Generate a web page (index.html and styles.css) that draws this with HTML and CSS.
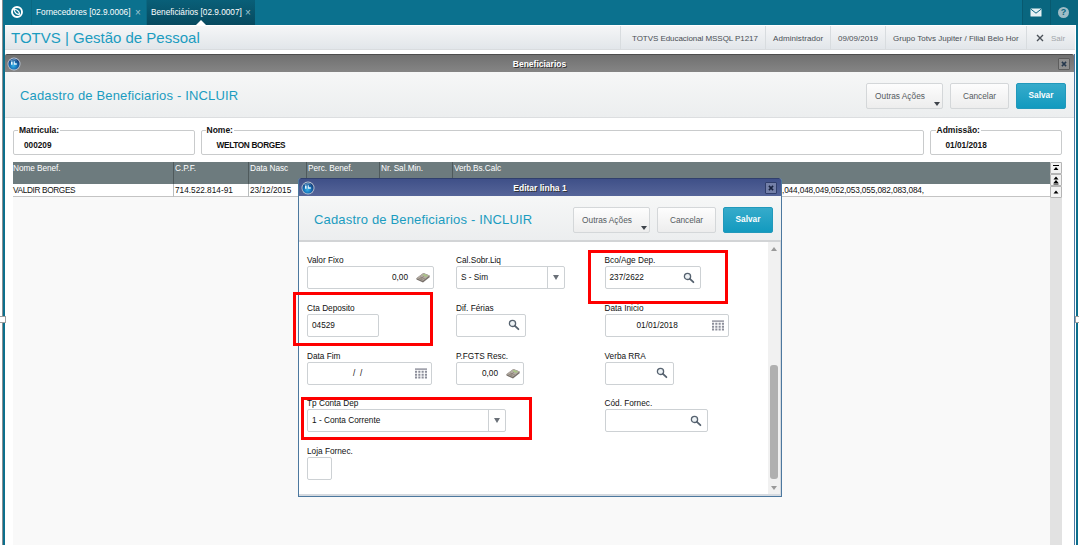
FILE: index.html
```html
<!DOCTYPE html>
<html lang="pt-BR">
<head>
    <meta charset="UTF-8">
    <title>TOTVS | Gestão de Pessoal</title>
    <link rel="stylesheet" href="styles.css">
</head>
<body>

<!-- shared icons -->
<svg class="defs" width="0" height="0">
    <defs>
        <radialGradient id="ball" cx="45%" cy="65%" r="60%">
            <stop offset="0" stop-color="#35b5ea"/>
            <stop offset="0.55" stop-color="#1672b8"/>
            <stop offset="1" stop-color="#173c78"/>
        </radialGradient>
        <symbol id="icon-app" viewBox="0 0 14 14">
            <circle cx="7" cy="7" r="6.5" fill="#b9c4d2"/>
            <circle cx="7" cy="7" r="5.6" fill="url(#ball)"/>
            <path d="M3 4.2C4 2 8 1.5 10.5 3.5C8 3 5.5 3.2 3 4.2Z" fill="#9fd4f0" opacity="0.7"/>
            <path d="M4 4.5h1.6v3.2H4zM6.7 4.2h1.1v2h2v1.5H6.7z" fill="#e6f5fc"/>
        </symbol>
        <symbol id="icon-search" viewBox="0 0 12 12">
            <circle cx="4.5" cy="4.4" r="3.1" fill="#eef3f6" stroke="#56626f" stroke-width="1.3"/>
            <path d="M6.9 6.8L10.4 10.2" stroke="#56626f" stroke-width="1.8" stroke-linecap="round"/>
        </symbol>
        <symbol id="icon-calendar" viewBox="0 0 12 11">
            <path d="M0 .4h12v1.4H0z" fill="#8b8d99"/>
            <path d="M0 3.8h12M0 6.7h12M0 9.6h12" stroke="#8b8d99" stroke-width="2" stroke-dasharray="2.1 1.2"/>
        </symbol>
        <symbol id="icon-calc" viewBox="0 0 14 11">
            <path d="M.4 6.2L7.4 1l6.2 2.6v1.6L7 10.6.5 7.6z" fill="#77706a"/>
            <path d="M.4 6.2L7.4 1l6.2 2.6L6.8 9z" fill="#b3aca3"/>
            <path d="M6.3 3.1L8 1.9l4 1.7-1.9 1.5z" fill="#a9c585"/>
            <path d="M2.4 6.1l5 2.1M4 4.9l5 2.1M4.4 7.1L7.8 4.4" stroke="#7d7168" stroke-width=".6"/>
        </symbol>
        <symbol id="icon-close" viewBox="0 0 6 6">
            <path d="M.9 .9L5.1 5.1M5.1 .9L.9 5.1" stroke="currentColor" stroke-width="1.5"/>
        </symbol>
        <symbol id="icon-exit" viewBox="0 0 8 8">
            <path d="M1 1l6 6M7 1L1 7" stroke="currentColor" stroke-width="1.4"/>
        </symbol>
    </defs>
</svg>

<div class="screen">
    <div class="topbar">
        <div class="logo">
            <svg width="14" height="14" viewBox="0 0 14 14">
                <circle cx="7" cy="7" r="5" fill="none" stroke="#fff" stroke-width="1.9"/>
                <path d="M4.2 4.6C6.2 4.2 9.4 5.6 9.6 9.2C7.4 9.6 4.6 8.2 4.2 4.6Z" fill="none" stroke="#fff" stroke-width="1.2"/>
            </svg>
        </div>
        <div class="tab tab-first"><span>Fornecedores [02.9.0006]</span><i>×</i></div>
        <div class="tab tab-active"><span>Beneficiários [02.9.0007]</span><i>×</i></div>
        <div class="top-icons">
            <div class="top-icon">
                <svg width="12" height="9" viewBox="0 0 12 9">
                    <rect x=".5" y=".5" width="11" height="8" rx=".6" fill="#e8f1f4"/>
                    <path d="M.7 1L6 5.2 11.3 1" fill="none" stroke="#0a6580" stroke-width="1"/>
                </svg>
            </div>
            <div class="top-icon help"><b>?</b></div>
        </div>
    </div>

    <div class="app-header">
        <h1>TOTVS | Gestão de Pessoal</h1>
        <div class="info">
            <span class="info-env">TOTVS Educacional MSSQL P1217</span>
            <span class="info-user">Administrador</span>
            <span class="info-date">09/09/2019</span>
            <span class="info-group">Grupo Totvs Jupiter / Filial Belo Hor</span>
            <span class="info-exit"><svg width="8" height="8"><use href="#icon-exit"/></svg>Sair</span>
        </div>
    </div>

    <div class="window">
        <div class="titlebar">
            <svg class="app-icon" width="14" height="14"><use href="#icon-app"/></svg>
            <span class="window-title">Beneficiarios</span>
            <span class="close"><svg width="6" height="6"><use href="#icon-close"/></svg></span>
        </div>
        <div class="window-header">
            <h2>Cadastro de Beneficiarios - INCLUIR</h2>
            <div class="actions">
                <button class="btn btn-more">Outras Ações</button>
                <button class="btn btn-cancel">Cancelar</button>
                <button class="btn btn-save">Salvar</button>
            </div>
        </div>
        <div class="window-body">
            <div class="groups">
                <fieldset class="g-matricula"><legend>Matricula:</legend><b>000209</b></fieldset>
                <fieldset class="g-nome"><legend>Nome:</legend><b>WELTON BORGES</b></fieldset>
                <fieldset class="g-admissao"><legend>Admissão:</legend><b>01/01/2018</b></fieldset>
            </div>
            <div class="grid">
                <div class="grid-main">
                    <div class="grid-row grid-head">
                        <span>Nome Benef.</span><span>C.P.F.</span><span>Data Nasc</span><span>Perc. Benef.</span><span>Nr. Sal.Min.</span><span>Verb.Bs.Calc</span>
                    </div>
                    <div class="grid-row grid-line">
                        <span class="name">VALDIR BORGES</span><span>714.522.814-91</span><span>23/12/2015</span><span></span><span></span><span class="verbs">,044,048,049,052,053,055,082,083,084,</span>
                    </div>
                </div>
                <div class="grid-scroll">
                    <span><svg width="8" height="8"><path d="M1 1h6v1H1zM4 3L6.5 6h-5z"/></svg></span>
                    <span><svg width="8" height="9"><path d="M4 .5L6.5 3.5h-5zM4 4L6.5 7h-5zM1.5 7.5h5v1h-5z"/></svg></span>
                    <span><svg width="8" height="8"><path d="M4 2.5L6.5 5.5h-5z"/></svg></span>
                </div>
            </div>
        </div>
    </div>
</div>

<i class="handle handle-left"></i>
<i class="handle handle-right"></i>

<div class="dialog">
    <div class="titlebar dialog-titlebar">
        <svg class="app-icon" width="14" height="14"><use href="#icon-app"/></svg>
        <span class="window-title">Editar linha 1</span>
        <span class="close"><svg width="6" height="6"><use href="#icon-close"/></svg></span>
    </div>
    <div class="window-header dialog-header">
        <h2>Cadastro de Beneficiarios - INCLUIR</h2>
        <div class="actions">
            <button class="btn btn-more">Outras Ações</button>
            <button class="btn btn-cancel">Cancelar</button>
            <button class="btn btn-save">Salvar</button>
        </div>
    </div>
    <div class="dialog-body">
        <div class="form">
            <div class="field"><label>Valor Fixo</label>
                <div class="box w-valor right">0,00<svg class="calc" width="14" height="11"><use href="#icon-calc"/></svg></div></div>
            <div class="field"><label>Cal.Sobr.Liq</label>
                <div class="box w-calc select">S - Sim<em></em></div></div>
            <div class="field"><label>Bco/Age Dep.</label>
                <div class="box w-bco">237/2622<svg class="lupa" width="12" height="12"><use href="#icon-search"/></svg></div></div>

            <div class="field"><label>Cta Deposito</label>
                <div class="box w-cta">04529</div></div>
            <div class="field"><label>Dif. Férias</label>
                <div class="box w-small"><svg class="lupa" width="12" height="12"><use href="#icon-search"/></svg></div></div>
            <div class="field"><label>Data Inicio</label>
                <div class="box w-date date">01/01/2018<svg class="cal" width="12" height="11"><use href="#icon-calendar"/></svg></div></div>

            <div class="field"><label>Data Fim</label>
                <div class="box w-date date empty">/&nbsp; /<svg class="cal" width="12" height="11"><use href="#icon-calendar"/></svg></div></div>
            <div class="field"><label>P.FGTS Resc.</label>
                <div class="box w-fgts right">0,00<svg class="calc" width="14" height="11"><use href="#icon-calc"/></svg></div></div>
            <div class="field"><label>Verba RRA</label>
                <div class="box w-small"><svg class="lupa" width="12" height="12"><use href="#icon-search"/></svg></div></div>

            <div class="field wide"><label>Tp Conta Dep</label>
                <div class="box w-tipo select">1 - Conta Corrente<em></em></div></div>
            <div class="field"><label>Cód. Fornec.</label>
                <div class="box w-cod"><svg class="lupa" width="12" height="12"><use href="#icon-search"/></svg></div></div>

            <div class="field"><label>Loja Fornec.</label>
                <div class="box w-loja"></div></div>
        </div>
        <div class="scrollbar"><i class="up"></i><i class="thumb"></i><i class="down"></i></div>
    </div>
</div>

<!-- highlighted fields -->
<i class="mark mark-bco"></i>
<i class="mark mark-cta"></i>
<i class="mark mark-tipo"></i>

</body>
</html>
```
FILE: styles.css
```css
* {
    box-sizing: border-box;
}
body {
    margin: 0;
    width: 1079px;
    height: 545px;
    overflow: hidden;
    position: relative;
    background: #fff;
    color: #111;
    font-family: "Liberation Sans", Arial, sans-serif;
    font-size: 8.25px;
}
.defs {
    position: absolute;
}
h1, h2 {
    margin: 0;
    font-weight: normal;
    color: #1b9cc0;
    white-space: nowrap;
}
.screen {
    margin: 0 1px 0 2px;
    height: 545px;
    border-left: 1px solid #8a8f93;
    display: flex;
    flex-direction: column;
    background: linear-gradient(90deg, #0b6f8c 2px, #fff 2px, #fff 1073px, #0b6f8c 1073px);
}

/* top bar */
.topbar {
    display: flex;
    height: 25px;
    background: #0b718e;
    color: #fff;
}
.logo {
    width: 28px;
    padding: 5px 0 0 7px;
}
.tab {
    display: flex;
    align-items: center;
    width: 115px;
    padding-left: 4px;
    border-left: 1px solid #0a6882;
    white-space: nowrap;
}
.tab span {
    width: 99px;
}
.tab i {
    font-style: normal;
    font-size: 10px;
    color: #9fc8d5;
}
.tab-active {
    width: 109px;
    padding-left: 4px;
    background: linear-gradient(#095f78, #074a5f);
    position: relative;
}
.tab-active span {
    width: 94px;
}
.tab-active::after {
    content: "";
    position: absolute;
    left: 49px;
    bottom: 0;
    border: 5px solid transparent;
    border-top: 0;
    border-bottom-color: #fff;
}
.top-icons {
    display: flex;
    margin-left: auto;
    background: #09667f;
}
.top-icon {
    width: 28px;
    padding-right: 2px;
    display: flex;
    align-items: center;
    justify-content: center;
    border-left: 1px solid #08596f;
}
.help b {
    width: 11px;
    height: 11px;
    border-radius: 50%;
    background: #9fbcc6;
    color: #09667f;
    font-size: 9px;
    line-height: 11px;
    text-align: center;
}

/* application header */
.app-header {
    display: flex;
    justify-content: space-between;
    height: 25px;
    margin: 0 3px 4px 2px;
    border-top: 1px solid #fff;
    border-bottom: 1px solid #d9dcdf;
    background: linear-gradient(#f5f6f7, #e2e6ea);
}
.app-header h1 {
    padding-left: 6px;
    font-size: 15px;
    line-height: 24px;
}
.info {
    display: flex;
    color: #4a4f55;
    font-size: 8px;
}
.info span {
    border-left: 1px solid #d8dcdf;
    line-height: 25px;
    padding-left: 7px;
    white-space: nowrap;
}
.info .info-env {
    width: 145px;
    padding-left: 11px;
    letter-spacing: -0.06px;
}
.info .info-user {
    width: 65px;
    letter-spacing: 0.07px;
}
.info .info-date {
    width: 55px;
}
.info .info-group {
    width: 141px;
}
.info .info-exit {
    width: 49px;
    padding-left: 9px;
    color: #a2a6aa;
}
.info-exit svg {
    margin-right: 7px;
    vertical-align: -1px;
    color: #4b5158;
}

/* windows */
.window {
    flex: 1;
    display: flex;
    flex-direction: column;
    margin: 0 3px 0 2px;
    border-right: 1px solid #4a7aa5;
}
.titlebar {
    display: flex;
    align-items: center;
    height: 18px;
    padding: 0 4px 0 2px;
    border-top: 1px solid #4d4d4d;
    border-radius: 2px 2px 0 0;
    background: linear-gradient(#707070, #858585);
    color: #fff;
}
.window-title {
    flex: 1;
    text-align: center;
    font-size: 8.5px;
    font-weight: bold;
    text-shadow: 1px 1px 0 #333;
}
.close {
    display: flex;
    align-items: center;
    justify-content: center;
    width: 12px;
    height: 12px;
    border: 1px solid #5d5d5d;
    border-radius: 1px;
    background: #8e8e8e;
    color: #26384d;
}
.window-header {
    display: flex;
    align-items: center;
    justify-content: space-between;
    height: 46px;
    padding: 2px 8px 0 15px;
    border-bottom: 1px solid #dcdee0;
    background: linear-gradient(#f6f7f7, #eceeef);
}
.window-header h2 {
    font-size: 13px;
    letter-spacing: 0.17px;
}
.actions {
    display: flex;
}
.btn {
    position: relative;
    height: 26px;
    margin-left: 7px;
    padding: 0;
    border: 1px solid #d4d7d9;
    border-radius: 2px;
    background: linear-gradient(#fdfdfd, #ededed);
    color: #555b61;
    font: 8.3px "Liberation Sans", Arial, sans-serif;
}
.btn-more {
    width: 77px;
    padding-right: 9px;
}
.btn-more::after {
    content: "";
    position: absolute;
    right: 2px;
    bottom: 2px;
    border: 3.5px solid transparent;
    border-top: 4px solid #3f444b;
    border-bottom: 0;
}
.btn-cancel {
    width: 59px;
}
.btn-save {
    width: 50px;
    border-color: #2199bb;
    background: linear-gradient(#36abcb, #129abf);
    color: #fff;
    font-size: 8.25px;
    font-weight: bold;
}
.window-body {
    flex: 1;
    display: flex;
    flex-direction: column;
    padding: 7px 11px 0 8px;
}
.groups {
    display: flex;
    height: 37px;
}
fieldset {
    height: 30px;
    margin: 0 6px 0 0;
    padding: 5px 0 0 10px;
    min-width: 0;
    border: 1px solid #c9cbcc;
    border-radius: 2px;
}
legend {
    margin-left: -6px;
    padding: 0 1px;
    line-height: 10px;
    font-size: 8.5px;
    font-weight: bold;
}
fieldset b {
    display: block;
    line-height: 12px;
}
.g-matricula {
    width: 182px;
}
.g-nome {
    width: 723px;
    margin-left: -0.5px;
    padding-left: 15px;
}
.g-nome b {
    letter-spacing: -0.33px;
}
.g-nome legend {
    margin-left: -11px;
}
.g-admissao {
    width: 132px;
    margin-right: 0;
    padding-left: 15px;
}
.g-admissao legend {
    margin-left: -10px;
}

/* grid */
.grid {
    flex: 1;
    display: flex;
}
.grid-main {
    width: 1037px;
    background: #f9f9f9;
}
.grid-row {
    display: grid;
    grid-template-columns: 161px 75px 58px 73px 73px 1fr;
    white-space: nowrap;
}
.grid-row span {
    padding-left: 1px;
    border-right: 1px solid #4f5a5c;
}
.grid-row span:first-child {
    padding-left: 0;
}
.grid-row span:last-child {
    border-right: 0;
}
.grid-head {
    height: 22px;
    background: #6d7b7e;
    color: #fff;
    line-height: 13px;
    letter-spacing: -0.05px;
}
.grid-line {
    height: 13px;
    border-bottom: 1px solid #c4c4c4;
    background: #fff;
    line-height: 13px;
}
.grid-line span {
    border-color: #b9bdbe;
}
.grid-line .name {
    letter-spacing: -0.35px;
}
.grid-line .verbs {
    padding-left: 329px;
    letter-spacing: -0.13px;
}
.grid-scroll {
    width: 12px;
    background: #e2e2e2;
}
.grid-scroll span {
    display: flex;
    align-items: center;
    justify-content: center;
    height: 12px;
    border: 1px solid #b5b5b5;
    border-radius: 1px;
    background: #f3f3f3;
}

/* selection handles on both sides */
.handle {
    position: absolute;
    top: 316px;
    left: -1px;
    width: 7px;
    height: 7px;
    border: 1px solid #a0a0a0;
    background: #fff;
}
.handle-right {
    left: 1075px;
}

/* edit dialog */
.dialog {
    position: absolute;
    left: 298px;
    top: 178px;
    width: 484px;
    height: 319px;
    display: flex;
    flex-direction: column;
    border: 1px solid #4c789f;
    border-top: 0;
    border-radius: 3px 3px 0 0;
    background: #fff;
}
.dialog-titlebar {
    border-top-color: #303f6d;
    background: linear-gradient(#3f5088, #566599);
}
.dialog-titlebar .close {
    border-color: #303e6b;
    background: #7480a8;
    color: #17213f;
}
.dialog-header {
    flex: none;
    padding-top: 3px;
    border-bottom: 2px solid #d2d4d6;
}
.dialog-body {
    flex: 1;
    display: flex;
    border-right: 1px solid #d5dae0;
    border-bottom: 2px solid #d5dae0;
}
.form {
    flex: 1;
    display: grid;
    grid-template-columns: 149px 148.5px 1fr;
    grid-auto-rows: 47.8px;
    align-content: start;
    padding: 13px 0 0 8px;
}
.field label {
    display: block;
    height: 11px;
    line-height: 11.5px;
}
.wide {
    grid-column: span 2;
}
.box {
    display: flex;
    align-items: center;
    height: 23px;
    padding: 0 5px 0 4px;
    border: 1px solid #cdd1d4;
    border-radius: 2px;
    background: #fff;
}
.w-valor { width: 127px; }
.w-calc { width: 109px; }
.w-bco { width: 96.5px; }
.w-cta { width: 72px; }
.w-small { width: 69.5px; }
.w-date { width: 124.5px; }
.w-fgts { width: 68px; }
.w-tipo { width: 199px; }
.w-cod { width: 103px; }
.w-loja { width: 25px; }
.right {
    justify-content: flex-end;
    padding-right: 3px;
}
.calc {
    margin-left: 8px;
}
.lupa, .cal {
    margin-left: auto;
}
.date {
    padding-left: 31px;
    padding-right: 4px;
}
.empty {
    padding-left: 45px;
}
.select {
    padding-right: 0;
}
.select em {
    display: flex;
    align-items: center;
    justify-content: center;
    width: 17px;
    height: 21px;
    margin-left: auto;
    border-left: 1px solid #cdd1d4;
}
.select em::after {
    content: "";
    border: 3px solid transparent;
    border-top: 5px solid #6a7078;
    border-bottom: 0;
}
.scrollbar {
    display: flex;
    flex-direction: column;
    align-items: center;
    width: 12px;
    padding: 5px 0 4px;
    background: #f1f1f1;
}
.scrollbar .up {
    border: 3px solid transparent;
    border-bottom: 4px solid #999;
    border-top: 0;
}
.scrollbar .down {
    margin-top: 7px;
    border: 3px solid transparent;
    border-top: 4px solid #999;
    border-bottom: 0;
}
.scrollbar .thumb {
    width: 8px;
    height: 114px;
    margin-top: auto;
    border-radius: 3px;
    background: #b0b0b0;
}

.mark {
    position: absolute;
    width: 140px;
    height: 54px;
    border: 3px solid #fe0000;
}
.mark-bco {
    left: 588px;
    top: 250px;
}
.mark-cta {
    left: 293px;
    top: 292px;
}
.mark-tipo {
    left: 301px;
    top: 397px;
    width: 231px;
    height: 43px;
}
```
